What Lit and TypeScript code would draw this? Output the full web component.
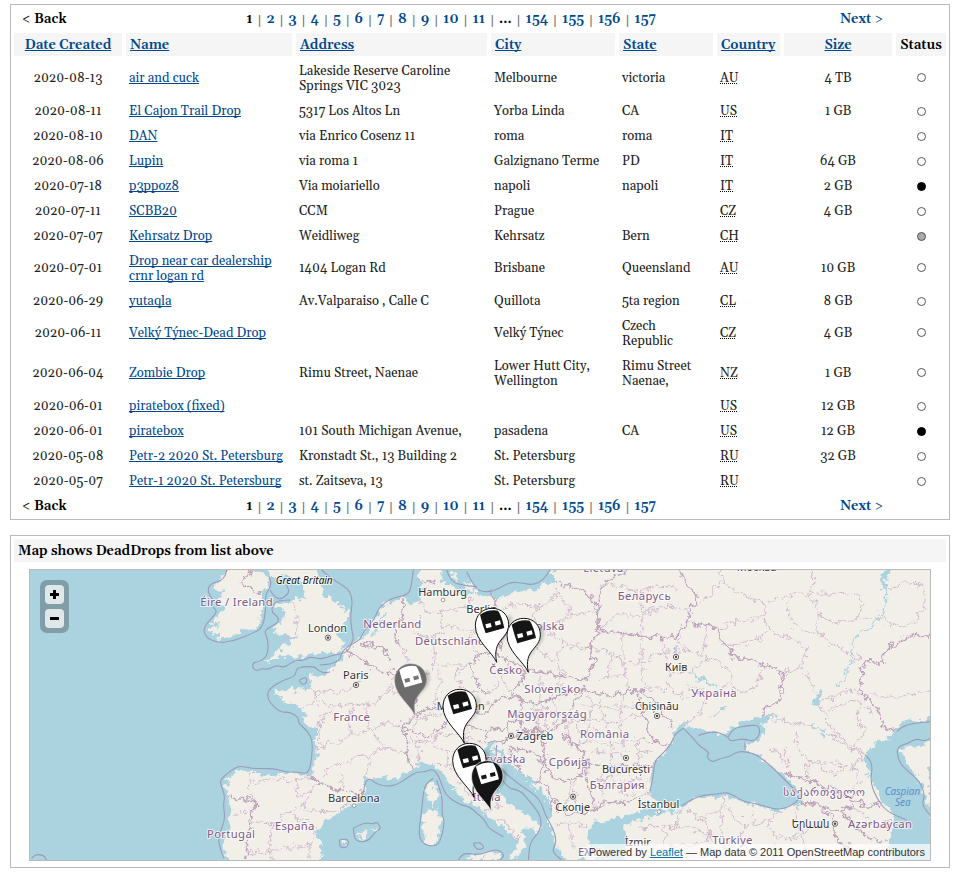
import { LitElement, html, svg, css, nothing } from "lit";
import { customElement } from "lit/decorators.js";

type Drop = [date: string, name: string, address: string, city: string, state: string, country: string, size: string, status?: string];

const DROPS: Drop[] = [
  ["2020-08-13", "air and cuck", "Lakeside Reserve Caroline Springs VIC 3023", "Melbourne", "victoria", "AU", "4 TB"],
  ["2020-08-11", "El Cajon Trail Drop", "5317 Los Altos Ln", "Yorba Linda", "CA", "US", "1 GB"],
  ["2020-08-10", "DAN", "via Enrico Cosenz 11", "roma", "roma", "IT", ""],
  ["2020-08-06", "Lupin", "via roma 1", "Galzignano Terme", "PD", "IT", "64 GB"],
  ["2020-07-18", "p3ppoz8", "Via moiariello", "napoli", "napoli", "IT", "2 GB", "full"],
  ["2020-07-11", "SCBB20", "CCM", "Prague", "", "CZ", "4 GB"],
  ["2020-07-07", "Kehrsatz Drop", "Weidliweg", "Kehrsatz", "Bern", "CH", "", "half"],
  ["2020-07-01", "Drop near car dealership crnr logan rd", "1404 Logan Rd", "Brisbane", "Queensland", "AU", "10 GB"],
  ["2020-06-29", "yutaqla", "Av.Valparaiso , Calle C", "Quillota", "5ta region", "CL", "8 GB"],
  ["2020-06-11", "Velký Týnec-Dead Drop", "", "Velký Týnec", "Czech Republic", "CZ", "4 GB"],
  ["2020-06-04", "Zombie Drop", "Rimu Street, Naenae", "Lower Hutt City, Wellington", "Rimu Street Naenae,", "NZ", "1 GB"],
  ["2020-06-01", "piratebox (fixed)", "", "", "", "US", "12 GB"],
  ["2020-06-01", "piratebox", "101 South Michigan Avenue,", "pasadena", "CA", "US", "12 GB", "full"],
  ["2020-05-08", "Petr-2 2020 St. Petersburg", "Kronstadt St., 13 Building 2", "St. Petersburg", "", "RU", "32 GB"],
  ["2020-05-07", "Petr-1 2020 St. Petersburg", "st. Zaitseva, 13", "St. Petersburg", "", "RU", ""],
];
const TALL = new Set([0, 7, 9, 10]);
const COLUMNS = ["Date Created", "Name", "Address", "City", "State", "Country", "Size", "Status"];
const PAGES = ["1", "2", "3", "4", "5", "6", "7", "8", "9", "10", "11", "...", "154", "155", "156", "157"];

/* Map geometry: three drawing units per pixel. */
const LAND = [
  "M625 15L590 55 580 72 610 85 588 110 612 125 600 150 572 180 600 178 568 205 595 205 598 222 640 210 690 192 715 185 728 140 720 95 745 60 740 30 700 15Z",
  "M752 15L765 45 800 25 830 45 845 62 858 100 828 100 818 112 770 114 778 130 795 140 785 175 752 190 775 205 832 220 800 238 760 272 733 295 760 288 780 275 830 280 865 265 930 268 975 252 972 228 955 215 982 160 978 130 935 110 908 80 885 15Z",
  "M1200 15L1195 50 1220 65 1200 100 1180 115 1150 100 1090 120 1060 160 1040 205 1010 228 965 260 955 300 920 325 880 332 866 318 868 372 830 375 815 365 765 380 790 405 848 430 860 485 885 490 890 560 878 632 800 625 740 628 660 615 615 640 625 690 630 740 622 790 608 840 625 885 900 885 905 850 885 800 930 760 1000 715 1035 685 1025 640 1090 640 1140 640 1190 600 1230 592 1270 620 1295 670 1340 710 1390 740 1425 770 1465 800 1500 830 1470 870 1480 885 1500 870 1518 835 1500 800 1530 785 1555 800 1560 785 1520 748 1460 710 1435 680 1420 630 1395 590 1385 560 1410 530 1445 525 1415 540 1420 570 1450 610 1510 645 1570 680 1590 720 1590 790 1620 850 1640 885 1740 885 1700 835 1720 770 1770 768 1820 750 1890 735 1990 735 1860 760 1815 780 1820 840 1810 885 2730 885 2730 15 1600 15 1610 50 1565 60 1545 78 1475 80 1420 105 1370 80 1330 100 1310 70 1270 60 1260 15Z",
  "M1240 645L1220 660 1215 690 1235 725 1252 690ZM1210 745L1205 780 1215 835 1240 845 1260 800 1262 755 1240 735ZM1010 815L1030 795 1045 800 1030 822ZM1340 875L1430 862 1450 870 1440 885 1340 885Z",
  "M1045 788L1062 782 1065 795ZM965 830L980 825 978 842ZM1335 55L1350 40 1365 60 1355 85ZM1285 30L1305 20 1315 50Z",
];
const SEA = [
  "M1990 478L1965 490 1955 545 1912 580 1886 640 1885 690 1925 718 1985 735 2020 700 2120 690 2160 712 2280 740 2340 715 2345 690 2300 640 2240 590 2180 558 2172 535 2215 525 2240 495 2225 478 2268 448 2230 455 2170 470 2130 490 2120 508 2075 498 2032 512 2028 530 2058 560 2075 588 2130 572 2172 552 2155 540 2120 525 2072 502Z",
  "M2750 462L2680 462 2640 478 2610 515 2550 550 2530 575 2550 640 2590 710 2625 762 2600 830 2620 895 2750 895 2735 820 2720 700 2700 650 2660 590 2635 560 2650 545 2700 545 2750 525Z",
];
const SHALLOW = [
  "M1420 540L1450 560 1470 600 1530 640 1560 665 1510 645 1450 610Z",
  "M2590 15L2585 60 2605 110 2595 70 2610 15ZM2375 420L2400 375 2410 378 2392 418ZM2010 320L2100 365 2040 345ZM2070 460L2100 425 2130 427 2100 435ZM1060 190L1090 150 1100 140 1080 175 1060 215Z",
];
const RIVERS = ["2600 60 2598 110 2580 155 2550 190 2505 210 2490 260 2500 290 2470 340 2455 360", "2010 318 2050 350 2100 365", "1968 240 1968 265", "2375 480 2430 510"];
const LINES_COUNTRY = [
  "1150 110 1145 170 1125 190 1135 240", "1020 235 1070 240 1100 260 1110 290", "980 258 1030 290 1060 310 1100 325 1120 330",
  "1120 310 1160 340 1200 350 1185 400 1180 440", "1145 490 1180 450 1240 420 1275 440 1290 465 1270 490 1240 500 1220 520 1180 500 1145 490",
  "1150 500 1165 530 1160 570 1175 620", "1280 450 1320 470 1360 440 1400 450 1420 410 1480 390 1510 400 1500 430 1490 460 1460 490 1400 500 1340 480 1290 470",
  "1400 390 1370 350 1345 300 1380 270 1420 260 1470 290 1520 310 1500 360 1470 390", "1410 80 1430 120 1445 180 1445 240 1420 260",
  "1510 400 1540 420 1600 400 1650 380 1690 370", "1520 310 1580 330 1640 330 1690 350", "1690 350 1735 300 1700 250 1740 200 1735 130 1700 80 1610 50",
  "1740 200 1800 203 1890 215 1965 220 1975 190 2010 175 2005 130 2045 110 1990 50 1980 15", "1735 130 1740 60 1800 30 1820 15",
  "1690 370 1660 420 1630 470 1590 500 1550 500 1510 490 1490 460", "1400 500 1390 530 1430 530 1470 520 1500 500 1550 500",
  "1470 550 1540 560 1570 580 1565 640 1540 660 1500 610 1470 570 1470 550", "1550 500 1580 540 1570 580 1590 640 1640 650 1680 640 1700 580 1670 540 1630 510",
  "1590 740 1600 700 1565 645", "1600 700 1620 760 1720 740 1770 700 1820 720 1850 700", "1700 590 1760 610 1830 600 1905 605", "1700 590 1690 640 1720 690 1720 740",
  "1690 370 1750 400 1800 382 1850 375 1900 400 1930 440 1955 480", "1850 385 1880 450 1890 530 1950 540",
  "2010 175 2090 175 2100 235 2135 250 2140 285 2190 280 2225 300 2295 320 2280 370 2290 410 2235 420 2230 455",
  "2740 210 2660 210 2590 260 2590 305 2540 280 2525 320 2520 380 2550 410 2600 470 2580 485 2630 500",
  "2290 625 2360 640 2440 680 2500 700 2540 730 2590 710", "2340 715 2400 720 2460 740 2500 720", "2400 725 2450 760 2440 830 2500 850", "2460 740 2520 800 2580 830",
  "625 700 700 700 715 715 690 740 695 780 680 820 685 850 675 885", "868 632 890 650 960 680 1030 685", "700 15 655 55 680 70 700 75 725 85", "1190 48 1245 50",
];
const LINES_REGION = [
  "820 110 835 145 825 190 835 215 745 225", "868 372 890 380 930 378 980 385 1020 340", "890 380 890 410 850 430", "890 410 940 430 1000 410 1040 430 1110 380 1120 330",
  "885 490 910 480 905 455 940 430", "890 560 910 530 960 540 990 500 1060 500 1090 470 1145 490", "905 455 890 500 910 550", "910 630 930 600 960 600 1010 570 1050 580 1090 540 1160 570",
  "1000 410 990 500", "1040 430 1040 480 1090 540", "1110 380 1185 400", "1050 580 1040 640", "960 600 975 680", "690 628 685 655 720 650 790 640 830 650 865 635",
  "685 655 695 700", "830 650 820 690 870 690 895 650", "870 690 850 730 810 735 770 780 695 770", "810 735 830 770 870 760 890 820 870 840 750 855 700 870 685 850", "770 780 745 780 755 830 750 855",
  "640 745 680 742", "850 730 930 750 985 715", "870 840 870 885", "750 855 760 885", "1200 100 1210 150 1260 140 1340 130 1360 100", "1210 150 1180 200 1145 190", "1260 140 1280 180 1240 230 1180 200",
  "1135 240 1170 260 1150 300 1160 340", "1240 230 1250 300 1200 350", "1250 300 1340 300", "1280 180 1360 200 1445 180", "1360 200 1345 240 1380 270", "1250 300 1265 360 1240 420", "1345 300 1300 320 1320 370 1400 390",
  "1320 370 1290 410 1275 440", "1445 130 1500 110 1550 130 1620 90 1600 60", "1550 130 1530 190 1590 200 1640 150 1730 140", "1530 190 1450 190", "1530 190 1550 250 1500 280", "1590 200 1630 240 1700 250", "1630 240 1600 290 1640 330",
  "1550 250 1600 290", "1620 90 1650 120 1640 150", "1740 200 1780 150 1800 150 1870 150 1930 120 2005 130", "1870 150 1860 80 1800 60 1740 60", "1870 150 1860 215", "1860 80 1930 60 1980 70",
  "1140 470 1200 460 1260 450", "1180 490 1195 460 1220 470 1230 430", "1160 530 1190 520 1230 540 1300 560 1380 560", "1230 540 1240 500 1300 510 1390 530", "1230 592 1300 610 1350 590 1420 600",
  "1300 610 1320 650 1380 640 1420 630", "1320 650 1340 700 1430 690", "1390 740 1440 720", "1500 830 1470 780 1430 760", "1460 490 1480 520 1530 520", "1420 410 1380 420 1370 445", "1480 390 1440 350 1470 290",
  "1440 350 1400 390", "1560 330 1560 410", "1620 330 1620 390", "1540 420 1560 460 1550 500", "1600 400 1620 440 1590 500", "1630 470 1700 460 1760 480 1850 450 1880 450", "1690 370 1720 420 1700 460 1710 530 1670 540",
  "1710 530 1780 540 1850 520 1890 530", "1760 480 1780 540 1770 600", "1850 520 1860 600", "1720 650 1780 640 1800 610", "1780 640 1800 700 1885 680", "1670 640 1650 700 1690 740", "1830 600 1840 690",
  "2045 110 2110 50 2100 15", "2110 50 2160 95 2240 110 2230 160 2120 175 2090 200", "2240 110 2320 85 2370 90 2380 55 2375 15", "2370 90 2400 140 2385 205 2440 240 2490 265 2530 285", "2400 140 2390 165 2520 175 2528 110 2510 85 2370 85",
  "2520 160 2580 155 2660 200 2710 130 2715 60 2650 45 2610 75", "2230 160 2240 200 2370 240 2340 310 2295 320", "2300 110 2315 190 2385 205", "2100 235 2190 245 2240 200", "2340 310 2380 350 2385 410 2440 400 2490 370 2520 380",
  "2385 410 2420 440 2430 500 2540 570", "2430 440 2500 390 2560 450", "2235 455 2330 480 2390 485 2440 520 2540 570 2490 600 2520 640 2500 690", "2330 500 2320 540 2360 590 2480 600", "2360 590 2360 640", "2400 600 2430 640 2480 600",
  "1800 200 1815 240 1810 290 1825 380", "1865 220 1860 300 1880 370", "1930 220 1950 320 1940 370 2000 400", "1975 190 1980 260 2060 275 2055 180", "2060 275 2140 310 2120 360 2180 390 2220 350 2230 300", "2000 360 2060 400 2120 360",
  "2060 400 2050 440 1990 480", "1820 380 1940 370", "2530 410 2500 460 2540 500 2490 560", "2550 390 2650 400 2740 370", "2000 735 2050 760 2080 810 2050 885", "2050 760 2120 730 2110 695", "2120 730 2170 790 2240 770 2280 740",
  "2170 790 2160 840 2220 880", "2240 770 2270 830 2350 810 2400 770", "2270 830 2260 885", "2350 810 2360 885", "1860 790 1930 780 2010 790 2080 810", "1930 780 1940 840 1900 885", "1940 840 2020 850 2080 810", "2340 715 2320 770 2350 810",
  "2290 550 2310 590 2300 610 2280 570 2250 555", "1810 290 1860 300 1900 270 1980 260", "1950 320 2020 330 2060 275", "1700 250 1780 260 1810 290", "1780 260 1770 330 1740 350", "1770 330 1825 330", "2480 720 2530 740 2570 790 2620 770",
  "1640 480 1650 540", "1670 470 1680 530", "1720 480 1740 520", "1800 470 1810 530", "1830 560 1790 570 1720 560", "1900 560 1860 560", "1690 420 1800 430 1860 420", "1740 400 1750 470", "1810 385 1800 460", "1570 410 1580 490", "1530 440 1620 440",
  "1745 610 1750 690", "1800 650 1880 640", "1650 650 1640 740", "1610 780 1660 770 1700 780", "1650 760 1660 850", "1190 520 1200 590", "1280 560 1290 600", "1340 500 1340 590", "2140 840 2080 860", "2200 740 2200 780", "1980 740 1970 790", "2010 850 2000 885", "2100 740 2110 800",
];
const LINES_MARITIME = [
  "620 15 615 45 570 55 562 80 580 105 575 125 595 140 550 185 555 215 590 234 640 228 690 208 728 190 738 130 735 90 755 60 748 35",
  "750 75 770 110 810 85 800 60", "810 105 765 105 752 140 775 155 775 175 730 195 745 225 743 272 720 290 700 292 697 308 710 318 725 310 745 314 770 300 790 308 810 296 830 285 850 287 870 275 895 282 920 278 940 270 985 262 1000 220",
  "905 15 925 35 975 65 990 80 998 110 990 160 1000 220", "930 320 920 325 895 318 885 305 850 305 830 310 825 335 790 345 745 372 742 400 760 425 785 443 805 440 835 455 835 475 865 500 878 530 875 580 866 628 830 620 800 622 770 612 730 610 700 611 660 602 635 615 605 640 600 655 615 690 610 720 615 760 605 790 595 820 600 850 612 880",
  "838 345 845 360 860 355 860 335 838 345", "1180 15 1175 60 1165 90 1110 100 1075 130 1065 160 1030 200 1020 225 990 240 965 260 960 285 930 298 900 300", "985 712 1015 705 1030 690 1035 650 1050 640 1070 658 1100 664 1130 660 1160 640 1190 620 1215 622 1240 610 1260 640 1275 690 1320 720 1350 725 1370 745 1395 765 1405 790 1450 815",
  "1240 640 1215 655 1208 700 1205 740 1198 780 1198 820 1215 840 1240 844 1260 835 1275 770 1265 750 1268 700 1250 645", "1000 790 1030 772 1060 778 1070 770 1085 790 1065 800 1045 830 1005 830 1000 790", "958 825 985 818 985 845 960 850 958 825",
  "1430 540 1425 590 1450 620 1500 660 1560 700 1575 750 1600 790 1610 830 1595 860 1625 885", "1430 620 1460 670 1500 675 1530 710 1565 755 1560 800 1530 830 1525 885", "1315 885 1325 868 1345 865 1380 870 1430 850 1455 870 1440 885", "1360 835 1380 830 1395 850 1370 855 1360 835",
  "1340 20 1360 60 1380 80 1420 80 1470 50 1510 55 1540 60 1570 45 1590 15", "1280 15 1290 45 1320 60 1370 65", "1990 490 1965 505 1955 535 1925 570 1905 585 1900 630 1890 680", "1985 722 2020 700 2050 690 2090 688 2120 682 2140 690 2170 710 2220 718 2270 735 2310 725 2335 705 2340 690 2310 660 2280 630 2250 600 2210 570 2180 560 2150 560 2130 575 2100 580 2080 592 2060 580 2068 560 2040 545 2028 530 2010 510 1990 490",
  "2035 512 2075 495 2125 515 2130 530 2170 520 2200 530 2215 515 2220 500 2215 480 2180 482 2140 490 2125 515", "2175 525 2175 555", "2630 500 2645 485 2680 475 2730 470", "2535 570 2560 590 2550 650 2570 700 2600 740 2660 765", "2730 520 2715 530 2690 520 2665 535 2630 545 2635 590 2665 620 2700 650 2715 690 2705 720 2730 750", "35 880 45 868 70 870 80 885",
];

type Label = [text: string, x: number, y: number, width: number, kind: string];
const LABELS: Label[] = [
  ["Great Britain", 767, 57, 171, "italic"], ["Éire / Ireland", 541, 123, 217, "country"], ["London", 864, 201, 117, "city"],
  ["Nederland", 1030, 189, 174, "country"], ["Deutschland", 1185, 240, 210, "country"], ["Hamburg", 1195, 94, 146, "city"], ["Berlin", 1339, 145, 92, "city"],
  ["Paris", 969, 343, 77, "city"], ["France", 940, 467, 110, "country"], ["München", 1250, 436, 144, "city"], ["Polska", 1525, 196, 108, "country"],
  ["Česko", 1408, 327, 98, "country"], ["Slovensko", 1513, 383, 168, "country"], ["Magyarország", 1462, 460, 238, "country"], ["Zagreb", 1490, 526, 110, "city"],
  ["Hrvatska", 1370, 594, 146, "country"], ["Србија", 1586, 602, 117, "country"], ["România", 1680, 518, 147, "country"], ["Italia", 1358, 707, 84, "country"],
  ["Barcelona", 924, 711, 155, "city"], ["España", 765, 794, 118, "country"], ["Portugal", 561, 820, 144, "country"], ["Скопје", 1606, 738, 104, "city"],
  ["București", 1746, 624, 144, "city"], ["България", 1709, 672, 165, "country"], ["Ελλάς", 1674, 872, 90, "country"], ["İzmir", 1814, 842, 78, "city"], ["İstanbul", 1853, 728, 125, "city"],
  ["Беларусь", 1793, 104, 159, "country"], ["Київ", 1935, 318, 67, "city"], ["Україна", 2014, 395, 136, "country"], ["Chișinău", 1845, 436, 131, "city"],
  ["საქართველო", 2290, 694, 245, "country"], ["Երևան", 2315, 788, 113, "city"], ["Azərbaycan", 2484, 790, 192, "country"], ["Türkiye", 2077, 837, 120, "country"],
  ["Caspian", 2594, 689, 107, "water"], ["Sea", 2625, 724, 47, "water"], ["Lietuva", 1690, 20, 120, "country"], ["Москва", 2150, 18, 120, "city"],
];
const CAPITALS = [[924, 218], [1008, 360], [1473, 513], [1659, 695], [1818, 579], [1911, 453], [1968, 276], [2445, 776]];
const TOWNS = [[1269, 105], [1002, 722], [1917, 740]];
const PINS: [number, number, string][] = [[1430, 292, "open"], [1525, 322, "open"], [1185, 450, "half"], [1333, 535, "open"], [1362, 697, "open"], [1415, 740, "full"]];

/* Rounds the corners of a polyline by running quadratic curves through its midpoints. */
function smooth(points: string): string {
  const n = points.split(" ").map(Number);
  let d = `M${n[0]} ${n[1]}`;
  for (let i = 2; i < n.length - 2; i += 2) {
    d += `Q${n[i]} ${n[i + 1]} ${(n[i] + n[i + 2]) / 2} ${(n[i + 1] + n[i + 3]) / 2}`;
  }
  return `${d}L${n[n.length - 2]} ${n[n.length - 1]}`;
}

@customElement("drop-pager")
class DropPager extends LitElement {
  static styles = css`
    :host { display: grid; grid-template-columns: 108px 670px 1fr; height: 28px; align-items: center; font-weight: 600; font-size: 13.5px; color: #000; }
    .back { padding-left: 8px; }
    .pages { display: flex; justify-content: center; padding-right: 12px; gap: 5.2px; }
    .bar { font-weight: normal; color: #777; font-family: "Liberation Sans", sans-serif; }
    .link { color: #00488f; }
    .next { padding-left: 48px; color: #00488f; }
    .sign { font-weight: normal; }
  `;
  render() {
    return html`<div class="back"><span class="sign">&lt;</span> Back</div>
      <div class="pages">${PAGES.map((p, i) => html`${i ? html`<span class="bar">|</span>` : nothing}<span class=${i === 0 || p === "..." ? "" : "link"}>${p}</span>`)}</div>
      <div class="next">Next <span class="sign">&gt;</span></div>`;
  }
}

@customElement("drop-map")
class DropMap extends LitElement {
  static styles = css`
    :host { display: grid; position: relative; height: 290px; overflow: hidden; border: 1px solid #bbb; }
    svg { display: block; }
    .land { fill: #f2efe9; }
    .sea { fill: #aad3df; }
    .line { fill: none; stroke-linejoin: round; }
    .country-line { stroke: #bda3bb; stroke-width: 5; }
    .region-line { stroke: #d0bbcd; stroke-width: 3.2; }
    .river { stroke: #aad3df; stroke-width: 4; }
    .maritime { stroke: #9b9bb9; stroke-width: 3.3; }
    .label { font: 35px "Noto Sans", "DejaVu Sans", sans-serif; paint-order: stroke; stroke: #fff; stroke-opacity: .75; stroke-width: 6px; stroke-linejoin: round; }
    .country { fill: #7d5a86; font-size: 34px; }
    .city { fill: #333; }
    .italic { fill: #111; font-style: italic; font-size: 31px; }
    .water { fill: #5b8fc9; font-style: italic; font-size: 31px; stroke: none; }
    .ring { fill: #f2efe9; stroke: #555; stroke-width: 2.5; }
    .dot { fill: #444; }
    .town { fill: #fff; stroke: #777; stroke-width: 2; }
    .shadow { fill: #000; opacity: .16; }
    .body-open { fill: #fff; stroke: #111; stroke-width: 3; }
    .body-full { fill: #151515; stroke: #fff; stroke-width: 2; }
    .body-half { fill: #6c6c6c; stroke: #858585; stroke-width: 2; }
    .ink { fill: #151515; } .paper { fill: #fff; } .grey { fill: #777; }
    .zoom { position: absolute; left: 10px; top: 10px; width: 19px; padding: 5px; display: grid; gap: 5px; border-radius: 7px; background: rgba(0, 0, 0, .25); }
    .button { height: 19px; border-radius: 4px; background: rgba(255, 255, 255, .75); display: grid; place-items: center; }
    .credit { position: absolute; right: 0; bottom: 0; height: 16px; width: 347px; box-sizing: border-box; padding-right: 5px; text-align: right; white-space: nowrap; font: 11px/16px "Liberation Sans", sans-serif; color: #333; background: linear-gradient(90deg, rgba(255, 255, 255, 0), rgba(255, 255, 255, .7) 10px); }
    .credit a { color: #0078a8; text-decoration: underline; }
  `;
  private pin([x, y, kind]: [number, number, string]) {
    const mask = kind === "open" ? "ink" : "paper";
    const eye = kind === "open" ? "paper" : kind === "half" ? "grey" : "ink";
    const scale = kind === "open" ? 1 : 0.945;
    return svg`<g transform="translate(${x} ${y}) scale(${scale})">
      <path class="shadow" filter="url(#soft)" d="M2 0C-5 -50 16 -62 32 -80C52 -102 52 -132 38 -145L0 -80Z"/>
      <path class="body-${kind}" d="M0 0C-14 -32 -64 -64 -64 -110C-64 -141 -42 -162 -14 -162C15 -162 36 -142 36 -113C36 -69 -15 -70 0 0Z"/>
      <path class=${mask} d="M-50 -143Q-25 -160 4 -155Q15 -140 23 -103L-33 -87Q-42 -112 -50 -143Z"/>
      <path class=${eye} d="M-34 -114L-18 -118 -15 -106 -31 -102ZM-6 -122L10 -126 13 -114 -3 -110Z"/>
    </g>`;
  }
  render() {
    const lines = (list: string[], cls: string) => list.map((p) => svg`<path class="line ${cls}" d=${smooth(p)}/>`);
    return html`<svg width="900" height="290" viewBox="30 15 2700 870">
        <defs>
          <filter id="rough" filterUnits="userSpaceOnUse" x="0" y="-15" width="2760" height="930" color-interpolation-filters="sRGB">
            <feTurbulence type="fractalNoise" baseFrequency="0.05" numOctaves="4" seed="4" result="n"/>
            <feDisplacementMap in="SourceGraphic" in2="n" scale="36" xChannelSelector="R" yChannelSelector="G"/>
          </filter>
          <filter id="soft"><feGaussianBlur stdDeviation="4"/></filter>
        </defs>
        <rect class="sea" x="0" y="0" width="2760" height="900"/>
        <g filter="url(#rough)">
          ${LAND.map((d) => svg`<path class="land" d=${d}/>`)}
          <path class="land" d="M2700 -15H2760V500H2700ZM1600 -15H2760V30H1600ZM1820 870H2620V910H1820ZM625 870H900V910H625ZM885 30H752V-15H885ZM625 30H700V-15H625ZM1200 30H1260V-15H1200Z"/>
          ${lines(LINES_REGION, "region-line")}
          ${lines(RIVERS, "river")}
          ${lines(LINES_COUNTRY, "country-line")}
          ${SEA.map((d) => svg`<path class="sea" d=${d}/>`)}
          ${SHALLOW.map((d) => svg`<path class="sea" d=${d}/>`)}
        </g>
        ${lines(LINES_MARITIME, "maritime")}
        ${CAPITALS.map(([x, y]) => svg`<circle class="ring" cx=${x} cy=${y} r="8"/><circle class="dot" cx=${x} cy=${y} r="3.5"/>`)}
        ${TOWNS.map(([x, y]) => svg`<circle class="town" cx=${x} cy=${y} r="5.5"/>`)}
        ${LABELS.map(([t, x, y, w, k]) => svg`<text class="label ${k}" x=${x} y=${y} textLength=${w} lengthAdjust=${k === "country" ? "spacing" : "spacingAndGlyphs"}>${t}</text>`)}
        ${PINS.map((p) => this.pin(p))}
      </svg>
      <div class="zoom">
        <div class="button"><svg width="9" height="9"><path d="M3 0H6V3H9V6H6V9H3V6H0V3H3Z"/></svg></div>
        <div class="button"><svg width="9" height="9"><path d="M0 3H9V6H0Z"/></svg></div>
      </div>
      <div class="credit">Powered by <a>Leaflet</a> — Map data © 2011 OpenStreetMap contributors</div>`;
  }
}

@customElement("app-root")
class AppRoot extends LitElement {
  static styles = css`
    :host { display: block; height: 872px; box-sizing: border-box; padding: 4px 10px 0; background: #fff; font: 14px/15px Gelasio, Georgia, "Liberation Serif", serif; color: #222; }
    .panel { border: 1px solid #bbb; box-sizing: border-box; padding: 0 3px; width: 940px; }
    .list { height: 516px; }
    .row { display: grid; grid-template-columns: 108px 166px 191px 124px 94px 63px 108px 50px; column-gap: 4px; height: 25px; padding-top: 2px; box-sizing: border-box; align-items: center; font-size: 13px; }
    .row.tall { height: 40px; padding-top: 1px; }
    .row.head { height: 23px; padding: 0; align-items: stretch; margin-bottom: 2px; font-size: 13.5px; line-height: 24px; font-weight: 600; }
    .head .cell { background: #f5f5f5; padding: 0 4px; color: #000; white-space: nowrap; height: 23px; }
    .cell { padding: 0 3px; }
    .mid { text-align: center; }
    a { color: #00488f; text-decoration: underline; text-underline-offset: 1px; text-decoration-skip-ink: none; }
    abbr { text-decoration: underline dotted 1px #000; text-underline-offset: 1px; text-decoration-skip-ink: none; }
    .status { display: grid; place-items: center; margin-top: -1px; }
    .tall .status { margin-top: -3px; }
    .light { width: 7px; height: 7px; border: 1px solid #555; border-radius: 50%; background: #fff; }
    .light.full { background: #000; border-color: #000; }
    .light.half { background: #aaa; }
    .bottom { margin-top: -1px; }
    .map { margin-top: 15px; height: 333px; padding-top: 3px; }
    .title { height: 23px; line-height: 25px; padding-left: 4px; background: #f5f5f5; color: #000; font-size: 13.5px; font-weight: 600; margin-bottom: 7px; }
    drop-map { width: 900px; margin-left: 15px; }
  `;
  render() {
    return html`<section class="panel list">
        <drop-pager></drop-pager>
        <div class="row head">${COLUMNS.map((c, i) => html`<div class="cell ${i === 0 || i > 5 ? "mid" : ""}">${i === 7 ? c : html`<a>${c}</a>`}</div>`)}</div>
        ${DROPS.map(([date, name, address, city, state, country, size, status], i) => html`<div class="row ${TALL.has(i) ? "tall" : ""}">
          <div class="cell mid">${date}</div><div class="cell"><a>${name}</a></div><div class="cell">${address}</div>
          <div class="cell">${city}</div><div class="cell">${state}</div><div class="cell"><abbr>${country}</abbr></div>
          <div class="cell mid">${size}</div><div class="status"><span class="light ${status ?? ""}"></span></div></div>`)}
        <drop-pager class="bottom"></drop-pager>
      </section>
      <section class="panel map">
        <div class="title">Map shows DeadDrops from list above</div>
        <drop-map></drop-map>
      </section>`;
  }
}
